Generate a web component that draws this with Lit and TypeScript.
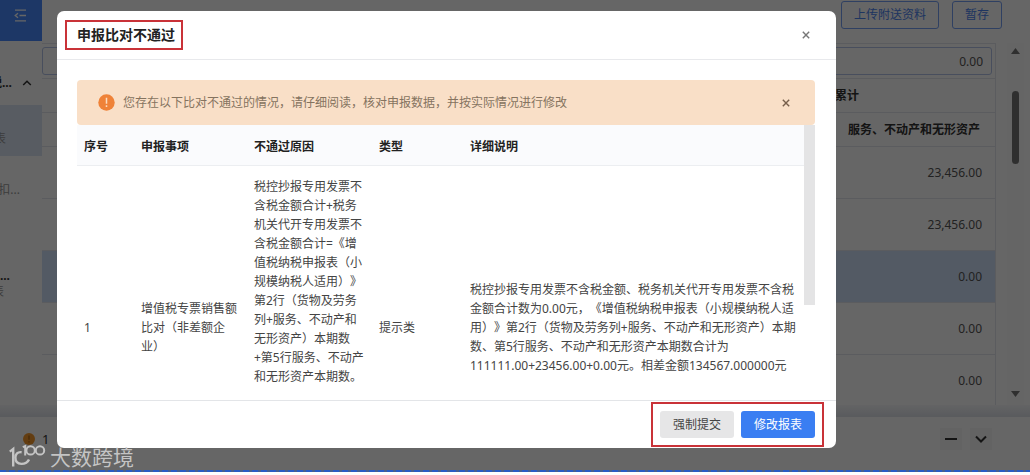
import { LitElement, html, css } from "lit";
import { customElement } from "lit/decorators.js";

const lines = (items: string[]) => items.map((t, i) => (i ? html`<br />${t}` : t));

const REASON = [
  "税控抄报专用发票不",
  "含税金额合计+税务",
  "机关代开专用发票不",
  "含税金额合计=《增",
  "值税纳税申报表（小",
  "规模纳税人适用）》",
  "第2行（货物及劳务",
  "列+服务、不动产和",
  "无形资产）本期数",
  "+第5行服务、不动产",
  "和无形资产本期数。",
];

const DETAIL = [
  "税控抄报专用发票不含税金额、税务机关代开专用发票不含税",
  "金额合计数为0.00元，《增值税纳税申报表（小规模纳税人适",
  "用）》第2行（货物及劳务列+服务、不动产和无形资产）本期",
  "数、第5行服务、不动产和无形资产本期数合计为",
  "111111.00+23456.00+0.00元。相差金额134567.000000元",
];

const SUBJECT = ["增值税专票销售额", "比对（非差额企", "业）"];

const base = css`
  * {
    box-sizing: border-box;
  }
  button,
  input {
    font: inherit;
    margin: 0;
    padding: 0;
  }
  button {
    cursor: pointer;
  }
  svg {
    display: block;
    flex: none;
  }
  table {
    border-collapse: separate;
    border-spacing: 0;
  }
`;

@customElement("report-page")
class ReportPage extends LitElement {
  static styles = [
    base,
    css`
      :host {
        display: flex;
        flex-direction: column;
        height: 100%;
        background: #fff;
        color: #555;
      }
      .upper {
        flex: 1;
        min-height: 0;
        display: flex;
        overflow: hidden;
      }
      .side {
        width: 42px;
        flex: none;
        overflow: hidden;
        background: #fff;
      }
      .fold {
        display: flex;
        justify-content: flex-end;
        width: 100%;
        height: 41px;
        padding: 9px 15px 0 0;
        border: 0;
        background: #4a8bff;
        color: #fff;
      }
      .entry {
        display: flex;
        justify-content: flex-end;
        align-items: center;
        white-space: nowrap;
        line-height: 16px;
      }
      .group {
        height: 64px;
        padding: 20px 10px 0 0;
        gap: 10px;
        color: #333;
        font-weight: 700;
      }
      .current {
        height: 51px;
        padding: 16px 36px 0 0;
        background: #dbe5f5;
        color: #999;
      }
      .item {
        height: 68px;
        padding-right: 22px;
        color: #999;
      }
      .dots {
        height: 16px;
        margin-top: 44px;
        padding-right: 32px;
        color: #333;
        font-weight: 700;
      }
      .tail {
        padding-right: 38px;
        color: #999;
      }
      .main {
        flex: 1;
        min-width: 0;
        display: flex;
        flex-direction: column;
      }
      .tools {
        display: flex;
        justify-content: flex-end;
        gap: 13px;
        padding: 1px 28px 14px 0;
      }
      .tools button {
        height: 28px;
        padding: 0 12px;
        border: 1px solid #76a0f5;
        border-radius: 3px;
        background: transparent;
        color: #4c84f0;
      }
      .content {
        flex: 1;
        min-height: 0;
        display: flex;
        gap: 11px;
        padding-right: 6px;
      }
      .sheet {
        flex: 1;
        min-width: 0;
        border-top: 1px solid #e4e7ee;
        border-right: 1px solid #e4e7ee;
      }
      .field {
        display: block;
        padding: 3px 3px 3px 0;
      }
      .field input {
        width: 100%;
        height: 28px;
        padding-right: 8px;
        border: 1px solid #b4c4e8;
        border-radius: 3px;
        background: transparent;
        color: inherit;
        text-align: right;
      }
      table {
        width: 100%;
      }
      th,
      td {
        padding: 0 13px 0 0;
        text-align: right;
        border-top: 1px solid #e4e7ee;
      }
      th {
        height: 34px;
        padding-right: 15px;
        color: #333;
      }
      .total {
        padding-right: 136px;
      }
      td {
        height: 52px;
      }
      .chosen td {
        background: #cfe2fa;
      }
      .rail {
        width: 17px;
        display: flex;
        flex-direction: column;
        align-items: center;
        padding: 5px 0 8px;
        background: #fcfcfc;
        color: #777;
      }
      .thumb {
        width: 7px;
        height: 73px;
        margin: 37px 0 auto;
        border-radius: 4px;
        background: #777;
      }
      .shade {
        flex: none;
        height: 12px;
        background: linear-gradient(#f8f9fb, #dfe2ea);
      }
      .dock {
        flex: none;
        height: 55px;
        display: flex;
        align-items: center;
        padding: 0 38px 12px 23px;
      }
      .count {
        margin: 0 auto 0 7px;
        font-size: 13px;
        color: #333;
      }
      .dock button {
        display: grid;
        place-items: center;
        width: 22px;
        height: 22px;
        margin-left: 8px;
        border: 0;
        background: #f7f7f8;
        color: #333;
      }
    `,
  ];

  render() {
    return html`
      <div class="upper">
        <nav class="side">
          <button class="fold" aria-label="收起菜单">
            <svg width="13" height="13" viewBox="0 0 13 13" fill="none" stroke="currentColor" stroke-width="1.3">
              <path d="M1 1.2h11M5.5 6.5H12M1 11.8h11M4 4.2 1.2 6.5 4 8.8" />
            </svg>
          </button>
          <div class="entry group">
            税...
            <svg width="10" height="8" viewBox="0 0 10 8" fill="none" stroke="currentColor" stroke-width="1.5">
              <path d="m1.2 6 3.8-3.8L8.8 6" />
            </svg>
          </div>
          <div class="entry current">表</div>
          <div class="entry item">产扣...</div>
          <div class="entry dots">...</div>
          <div class="entry tail">表</div>
        </nav>
        <main class="main">
          <div class="tools">
            <button>上传附送资料</button>
            <button>暂存</button>
          </div>
          <div class="content">
            <div class="sheet">
              <label class="field"><input aria-label="金额" value="0.00" /></label>
              <table>
                <thead>
                  <tr><th class="total">累计</th></tr>
                  <tr><th>服务、不动产和无形资产</th></tr>
                </thead>
                <tbody>
                  ${["23,456.00", "23,456.00", "0.00", "0.00", "0.00"].map(
                    (v, i) => html`<tr class=${i === 2 ? "chosen" : ""}><td>${v}</td></tr>`,
                  )}
                </tbody>
              </table>
            </div>
            <div class="rail">
              <svg width="9" height="6" viewBox="0 0 9 6" fill="currentColor"><path d="M4.5 0 9 6H0z" /></svg>
              <div class="thumb"></div>
              <svg width="9" height="6" viewBox="0 0 9 6" fill="currentColor"><path d="M0 0h9L4.5 6z" /></svg>
            </div>
          </div>
        </main>
      </div>
      <div class="shade"></div>
      <footer class="dock">
        <svg width="12" height="12" viewBox="0 0 12 12">
          <circle cx="6" cy="6" r="6" fill="#f79a2c" />
          <path d="M6 2.6v4.2M6 8.2v1.3" stroke="#a86414" stroke-width="1.2" />
        </svg>
        <span class="count">1</span>
        <button aria-label="最小化">
          <svg width="14" height="14" viewBox="0 0 14 14" stroke="currentColor" stroke-width="2"><path d="M1 7h12" /></svg>
        </button>
        <button aria-label="展开">
          <svg width="14" height="14" viewBox="0 0 14 14" fill="none" stroke="currentColor" stroke-width="2"><path d="m2 4.5 5 5 5-5" /></svg>
        </button>
      </footer>
    `;
  }
}

@customElement("compare-dialog")
class CompareDialog extends LitElement {
  static styles = [
    base,
    css`
      :host {
        flex: 1;
        min-width: 0;
        display: flex;
        flex-direction: column;
        overflow: hidden;
        border-radius: 7px;
        background: #fff;
        color: #444;
      }
      .head {
        flex: none;
        display: flex;
        align-items: center;
        justify-content: space-between;
        height: 49px;
        padding: 0 24px 0 8px;
        border-bottom: 1px solid #e8e9ec;
      }
      h2 {
        margin: 0;
        padding: 0 6px 0 10px;
        border: 2px solid #c93238;
        font-size: 14px;
        line-height: 26px;
        color: #222;
      }
      .close {
        display: grid;
        place-items: center;
        width: 12px;
        height: 12px;
        border: 0;
        background: none;
        color: #777;
      }
      .body {
        flex: 1;
        min-height: 0;
        display: flex;
        flex-direction: column;
        padding: 20px 21px 4px 20px;
      }
      .alert {
        flex: none;
        display: flex;
        align-items: center;
        gap: 8px;
        height: 45px;
        padding: 0 23px 0 21px;
        border-radius: 4px;
        background: #f9dfc7;
        color: #85735f;
      }
      .alert .close {
        margin-left: auto;
        color: #775f4b;
      }
      .scroll {
        flex: 1;
        min-height: 0;
        display: flex;
        overflow: hidden;
      }
      table {
        flex: 1;
        table-layout: fixed;
        line-height: 19px;
      }
      th,
      td {
        padding: 0 0 0 7px;
        text-align: left;
        white-space: nowrap;
      }
      th {
        height: 41px;
        padding-top: 3px;
        background: #fafbfd;
        border-bottom: 1px solid #eceef1;
        color: #222;
      }
      td {
        height: 322px;
        vertical-align: middle;
      }
      .reason {
        padding-top: 11px;
        vertical-align: top;
      }
      .no {
        width: 57px;
      }
      .subject {
        width: 113px;
      }
      .cause {
        width: 125px;
      }
      .kind {
        width: 91px;
      }
      .bar {
        width: 11px;
        height: 180px;
        background: #e4e4e5;
      }
      .foot {
        flex: none;
        display: flex;
        align-items: center;
        justify-content: flex-end;
        height: 48px;
        padding-right: 12px;
        border-top: 1px solid #e3e5e8;
      }
      .actions {
        display: flex;
        gap: 7px;
        padding: 7px;
        border: 2px solid #c93238;
      }
      .actions button {
        width: 74px;
        height: 27px;
        border: 0;
        border-radius: 3px;
        background: #e6e6e7;
        color: #444;
      }
      .actions .primary {
        background: #3a7ef2;
        color: #fff;
      }
    `,
  ];

  private cross() {
    return html`<svg width="8" height="8" viewBox="0 0 8 8" stroke="currentColor" stroke-width="1.4">
      <path d="m.8.8 6.4 6.4M7.2.8.8 7.2" />
    </svg>`;
  }

  render() {
    return html`
      <header class="head">
        <h2>申报比对不通过</h2>
        <button class="close" aria-label="关闭">${this.cross()}</button>
      </header>
      <div class="body">
        <div class="alert" role="alert">
          <svg width="17" height="17" viewBox="0 0 17 17">
            <circle cx="8.5" cy="8.5" r="8.2" fill="#ef8238" />
            <path d="M8.5 3.8v6M8.5 11.3v1.7" stroke="#fbdcc0" stroke-width="1.5" />
          </svg>
          <span>您存在以下比对不通过的情况，请仔细阅读，核对申报数据，并按实际情况进行修改</span>
          <button class="close" aria-label="关闭提示">${this.cross()}</button>
        </div>
        <div class="scroll">
          <table>
            <thead>
              <tr>
                <th class="no">序号</th>
                <th class="subject">申报事项</th>
                <th class="cause">不通过原因</th>
                <th class="kind">类型</th>
                <th>详细说明</th>
              </tr>
            </thead>
            <tbody>
              <tr>
                <td>1</td>
                <td>${lines(SUBJECT)}</td>
                <td class="reason">${lines(REASON)}</td>
                <td>提示类</td>
                <td>${lines(DETAIL)}</td>
              </tr>
            </tbody>
          </table>
          <div class="bar"></div>
        </div>
      </div>
      <footer class="foot">
        <div class="actions">
          <button>强制提交</button>
          <button class="primary">修改报表</button>
        </div>
      </footer>
    `;
  }
}

@customElement("app-root")
class AppRoot extends LitElement {
  static styles = [
    base,
    css`
      :host {
        display: block;
        position: relative;
        height: 100vh;
        padding-bottom: 3px;
        overflow: hidden;
        background: #fff;
        font: 12px/18px "Noto Sans", "Noto Sans CJK SC", sans-serif;
        text-spacing-trim: space-all;
        box-sizing: border-box;
      }
      .mask {
        position: absolute;
        inset: 0 0 3px;
        display: flex;
        padding: 11px 194px 24px 57px;
        background: rgba(0, 0, 0, 0.6);
      }
      .edge {
        position: absolute;
        inset: auto 0 3px;
        height: 2px;
        background: repeating-linear-gradient(90deg, #2a5cc4 0 6px, #46618f 6px 9px);
      }
      .brand {
        position: absolute;
        left: 9px;
        bottom: 5px;
        display: flex;
        align-items: center;
        gap: 4px;
        color: #c4c4c4;
        font-size: 21px;
        line-height: 26px;
      }
    `,
  ];

  render() {
    return html`
      <report-page></report-page>
      <div class="mask"><compare-dialog role="dialog" aria-label="申报比对不通过"></compare-dialog></div>
      <div class="edge"></div>
      <div class="brand">
        <svg width="37" height="26" viewBox="0 0 37 26" fill="none" stroke="currentColor" stroke-width="2.4">
          <path d="M.8 7.6 4.2 5v17.5" />
          <path d="M12.6 8.2C8.6 7.6 6.4 10 6.4 13.600c0 4 2.400 6.300 6 6.300 3.600 0 6.400-1.600 7.600-4.400" />
          <path d="M13.800 3.200 16.200 2v9.500" stroke-width="2" />
          <circle cx="21.600" cy="6.400" r="4.200" stroke-width="2" />
          <circle cx="31" cy="6.400" r="4.200" stroke-width="2" />
        </svg>
        <span>大数跨境</span>
      </div>
    `;
  }
}
